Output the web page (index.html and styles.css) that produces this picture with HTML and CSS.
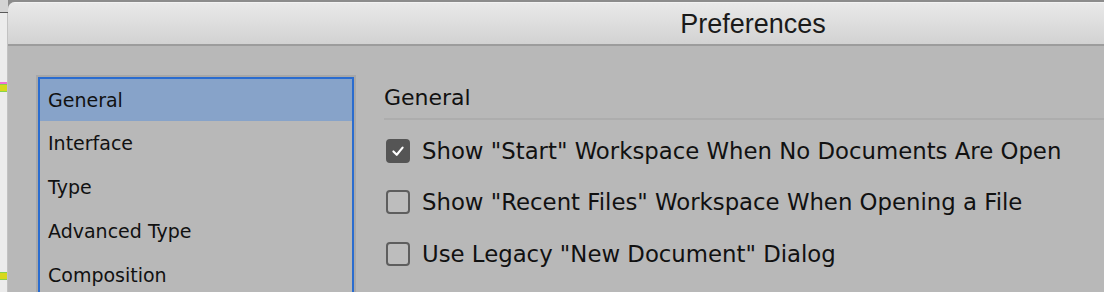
FILE: index.html
```html
<!DOCTYPE html>
<html>
<head>
<meta charset="utf-8">
<link rel="stylesheet" href="styles.css">
</head>
<body>
<div class="desk">
  <div class="strip">
    <div class="strip-top"></div>
    <div class="strip-body">
      <div class="mark mark-a"><span class="pink"></span><span class="yellow"></span></div>
      <div class="mark mark-b"><span class="yellow"></span></div>
    </div>
  </div>
  <div class="window">
    <div class="titlebar">Preferences</div>
    <div class="content">
      <div class="listframe">
        <ul class="list">
          <li class="item selected">General</li>
          <li class="item">Interface</li>
          <li class="item">Type</li>
          <li class="item">Advanced Type</li>
          <li class="item">Composition</li>
        </ul>
      </div>
      <div class="panel">
        <div class="heading">General</div>
        <label class="row"><span class="box checked"><svg viewBox="0 0 24 24" width="24" height="24"><path d="M6.5 12.5 L10.5 16.5 L17.5 8" fill="none" stroke="#ffffff" stroke-width="2.6" stroke-linecap="round" stroke-linejoin="round"/></svg></span><span class="label">Show "Start" Workspace When No Documents Are Open</span></label>
        <label class="row"><span class="box"></span><span class="label">Show "Recent Files" Workspace When Opening a File</span></label>
        <label class="row"><span class="box"></span><span class="label">Use Legacy "New Document" Dialog</span></label>
      </div>
    </div>
  </div>
</div>
</body>
</html>
```

FILE: styles.css
```css
html, body {
  margin: 0;
  padding: 0;
  overflow: hidden;
}
body {
  width: 1104px;
  height: 292px;
  background: #8c8c8c;
}
.desk {
  display: flex;
  height: 292px;
  width: 1600px;
}
.strip {
  width: 8px;
  flex: none;
  display: flex;
  flex-direction: column;
}
.strip-top {
  height: 12px;
  background: #d4d4d4;
  border-bottom: 1px solid #5a5a5a;
}
.strip-body {
  flex: 1;
  background: #ececec;
  border-right: 1px solid #c2c2c2;
  display: flex;
  flex-direction: column;
}
.mark {
  display: flex;
  flex-direction: column;
}
.mark-a {
  margin-top: 69px;
}
.mark-b {
  margin-top: 180px;
}
.pink {
  display: block;
  height: 2px;
  background: #ef6fd6;
}
.yellow {
  display: block;
  height: 6px;
  background: #d8d81c;
  border-top: 1px solid #8ad24a;
  border-bottom: 1px solid #8ad24a;
}
.window {
  flex: none;
  width: 1490px;
  margin-top: 2px;
  border-top-left-radius: 7px;
  overflow: hidden;
  background: #b8b8b8;
  display: flex;
  flex-direction: column;
}
.titlebar {
  height: 41px;
  background: linear-gradient(#e9e9e9, #d2d2d2);
  border-top: 1px solid #f2f2f2;
  border-bottom: 2px solid #9c9c9c;
  text-align: center;
  font-family: "Liberation Sans", Arial, sans-serif;
  font-size: 27px;
  line-height: 42px;
  color: #1a1a1a;
}
.content {
  display: flex;
  gap: 28px;
  padding: 29px 0 0 28px;
  flex: 1;
}
.listframe {
  width: 316px;
  border: 2px solid #a8a8a8;
  border-bottom: none;
  flex: none;
}
.list {
  list-style: none;
  margin: 0;
  padding: 0;
  height: 100%;
  border: 2px solid #2a6ccf;
  border-bottom: none;
}
.item {
  height: 44px;
  line-height: 44px;
  padding-left: 8px;
  font-family: "DejaVu Sans", Verdana, sans-serif;
  font-size: 19px;
  color: #111;
}
.item.selected {
  height: 42px;
  line-height: 42px;
  background: #87a3c9;
}
.panel {
  flex: 1;
  display: flex;
  flex-direction: column;
  font-family: "DejaVu Sans", Verdana, sans-serif;
  color: #111;
}
.heading {
  height: 43px;
  line-height: 46px;
  font-size: 22px;
  border-bottom: 2px solid #adadad;
}
.row {
  display: flex;
  align-items: center;
  height: 51.5px;
  padding-left: 2px;
  gap: 12px;
}
.row:first-of-type {
  margin-top: 5px;
}
.box {
  width: 20px;
  height: 20px;
  border: 2px solid #5e5e5e;
  border-radius: 4px;
  background: #bdbdbd;
  flex: none;
  display: flex;
  align-items: center;
  justify-content: center;
}
.box.checked {
  background: #555555;
  border-color: #555555;
}
.box svg {
  width: 22px;
  height: 22px;
}
.label {
  font-size: 22.8px;
  white-space: nowrap;
}
```
